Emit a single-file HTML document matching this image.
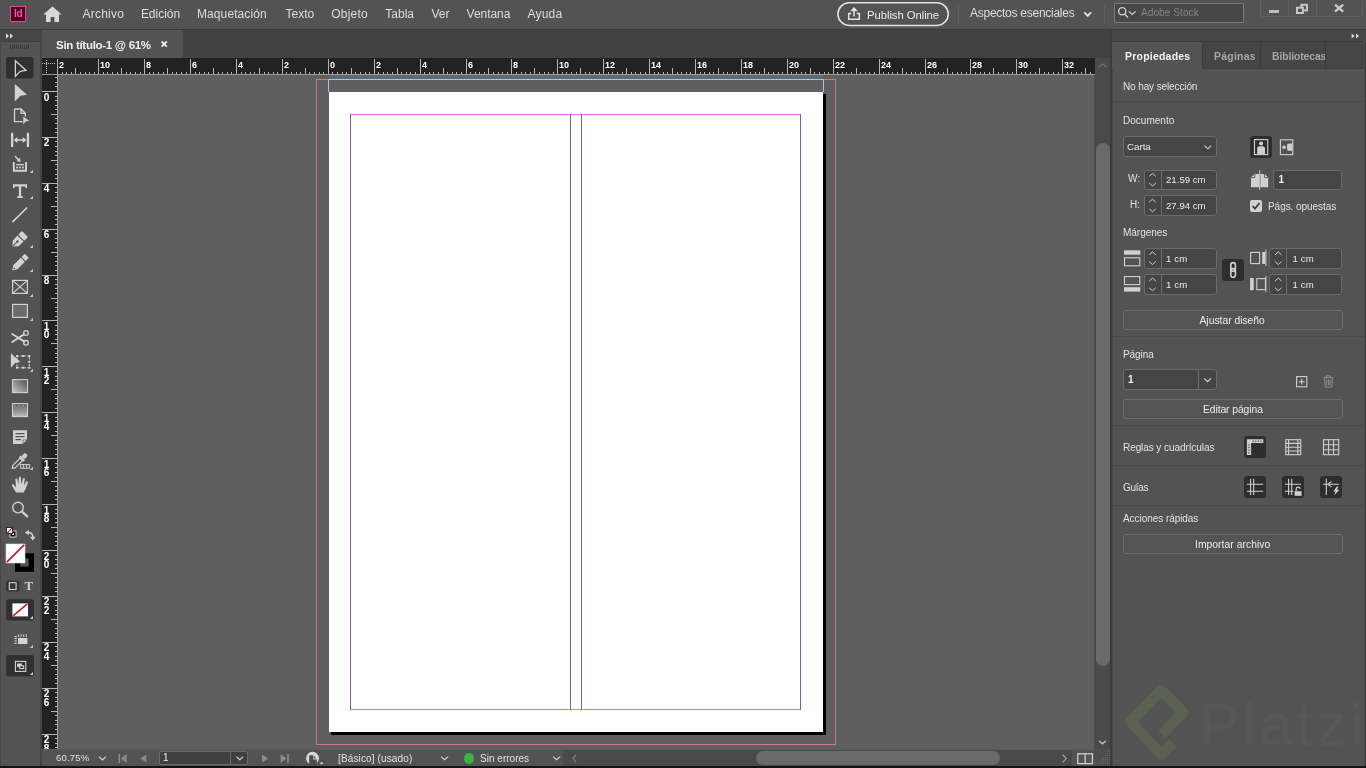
<!DOCTYPE html>
<html lang="es"><head><meta charset="utf-8"><title>Sin título-1 @ 61%</title>
<style>
*{box-sizing:border-box;margin:0;padding:0}
html,body{width:1366px;height:768px;overflow:hidden;background:#535353}
body{position:relative;font-family:"Liberation Sans",sans-serif;color:#e4e4e4;font-size:12px}
.a{position:absolute}
.t{position:absolute;white-space:nowrap;line-height:16px;height:16px}
.b{font-weight:bold}
svg{position:absolute;overflow:visible}
#app{position:absolute;left:0;top:0;width:1366px;height:768px;overflow:hidden;will-change:transform;transform:translateZ(0)}
</style></head>
<body>
<div id="app">
<div class="a" style="left:0px;top:0px;width:1366px;height:29px;background:#535353;"></div>
<div class="a" style="left:0px;top:29px;width:1366px;height:1px;background:#3b3b3b;"></div>
<div class="a" style="left:0px;top:30px;width:40px;height:11px;background:#464646;"></div>
<div class="a" style="left:0px;top:41px;width:40px;height:1px;background:#3f3f3f;"></div>
<div class="a" style="left:0px;top:42px;width:40px;height:724px;background:#535353;"></div>
<div class="a" style="left:0px;top:30px;width:1px;height:736px;background:#474747;"></div>
<div class="a" style="left:40px;top:30px;width:2px;height:736px;background:#444444;"></div>
<div class="a" style="left:42px;top:30px;width:1070px;height:28px;background:#424242;"></div>
<div class="a" style="left:42px;top:30px;width:141px;height:28px;background:#535353;"></div>
<div class="a" style="left:42px;top:58px;width:1052px;height:691px;background:#5f5f5f;"></div>
<div class="a" style="left:1094px;top:58px;width:16px;height:690px;background:#4b4b4b;"></div>
<div class="a" style="left:42px;top:749px;width:1068px;height:1px;background:#5a5a5a;"></div>
<div class="a" style="left:42px;top:750px;width:1068px;height:16px;background:#535353;"></div>
<div class="a" style="left:1112px;top:30px;width:254px;height:11px;background:#464646;"></div>
<div class="a" style="left:1112px;top:41px;width:252px;height:1px;background:#3c3c3c;"></div>
<div class="a" style="left:1112px;top:42px;width:252px;height:26px;background:#454545;"></div>
<div class="a" style="left:1112px;top:68px;width:252px;height:1px;background:#3e3e3e;"></div>
<div class="a" style="left:1112px;top:69px;width:252px;height:697px;background:#535353;"></div>
<div class="a" style="left:1110px;top:30px;width:2px;height:736px;background:#3c3c3c;"></div>
<div class="a" style="left:1112px;top:30px;width:1px;height:736px;background:#474747;"></div>
<div class="a" style="left:1364px;top:42px;width:1px;height:724px;background:#4b4b4b;"></div>
<div class="a" style="left:1365px;top:42px;width:1px;height:724px;background:#383838;"></div>
<div class="a" style="left:0px;top:766px;width:1366px;height:2px;background:#141414;"></div>
<div class="a" style="left:316px;top:79px;width:520px;height:666px;border:1px solid #d07884"></div>
<div class="a" style="left:329px;top:75px;width:494px;height:4px;background:#5a6b76;"></div>
<div class="a" style="left:328px;top:79px;width:496px;height:1px;background:#a6c6d8;"></div>
<div class="a" style="left:328px;top:79px;width:1px;height:13px;background:#a6c6d8;"></div>
<div class="a" style="left:823px;top:79px;width:1px;height:13px;background:#a6c6d8;"></div>
<div class="a" style="left:331px;top:93.5px;width:495px;height:641.5px;background:#000;"></div>
<div class="a" style="left:329px;top:91.6px;width:494.3px;height:640.6px;background:#fff;"></div>
<div class="a" style="left:350px;top:114px;width:451px;height:1px;background:#d773dc;"></div>
<div class="a" style="left:350px;top:709px;width:451px;height:1px;background:#d773dc;"></div>
<div class="a" style="left:350px;top:114px;width:1px;height:596px;background:#8757b3;"></div>
<div class="a" style="left:570px;top:114px;width:1px;height:596px;background:#8757b3;"></div>
<div class="a" style="left:581px;top:114px;width:1px;height:596px;background:#8757b3;"></div>
<div class="a" style="left:800px;top:114px;width:1px;height:596px;background:#8757b3;"></div>
<div class="a" style="left:58px;top:58px;width:1037px;height:17px;background:#222222;"></div>
<div class="a" style="left:42px;top:58px;width:16px;height:17px;background:#222222;"></div>
<div class="a" style="left:42px;top:75px;width:16px;height:674px;background:#222222;"></div>
<svg style="left:0px;top:0px;pointer-events:none" width="1366" height="768" viewBox="0 0 1366 768"><g fill="#b8b5b0" shape-rendering="crispEdges"><rect x="62" y="72" width="1" height="2"/><rect x="66" y="72" width="1" height="2"/><rect x="71" y="72" width="1" height="2"/><rect x="75" y="68" width="1" height="6"/><rect x="80" y="72" width="1" height="2"/><rect x="85" y="72" width="1" height="2"/><rect x="89" y="72" width="1" height="2"/><rect x="94" y="72" width="1" height="2"/><rect x="98" y="59" width="1" height="15"/><rect x="103" y="72" width="1" height="2"/><rect x="107" y="72" width="1" height="2"/><rect x="112" y="72" width="1" height="2"/><rect x="117" y="72" width="1" height="2"/><rect x="121" y="68" width="1" height="6"/><rect x="126" y="72" width="1" height="2"/><rect x="130" y="72" width="1" height="2"/><rect x="135" y="72" width="1" height="2"/><rect x="140" y="72" width="1" height="2"/><rect x="144" y="59" width="1" height="15"/><rect x="149" y="72" width="1" height="2"/><rect x="153" y="72" width="1" height="2"/><rect x="158" y="72" width="1" height="2"/><rect x="163" y="72" width="1" height="2"/><rect x="167" y="68" width="1" height="6"/><rect x="172" y="72" width="1" height="2"/><rect x="176" y="72" width="1" height="2"/><rect x="181" y="72" width="1" height="2"/><rect x="186" y="72" width="1" height="2"/><rect x="190" y="59" width="1" height="15"/><rect x="195" y="72" width="1" height="2"/><rect x="199" y="72" width="1" height="2"/><rect x="204" y="72" width="1" height="2"/><rect x="208" y="72" width="1" height="2"/><rect x="213" y="68" width="1" height="6"/><rect x="218" y="72" width="1" height="2"/><rect x="222" y="72" width="1" height="2"/><rect x="227" y="72" width="1" height="2"/><rect x="231" y="72" width="1" height="2"/><rect x="236" y="59" width="1" height="15"/><rect x="241" y="72" width="1" height="2"/><rect x="245" y="72" width="1" height="2"/><rect x="250" y="72" width="1" height="2"/><rect x="254" y="72" width="1" height="2"/><rect x="259" y="68" width="1" height="6"/><rect x="264" y="72" width="1" height="2"/><rect x="268" y="72" width="1" height="2"/><rect x="273" y="72" width="1" height="2"/><rect x="277" y="72" width="1" height="2"/><rect x="282" y="59" width="1" height="15"/><rect x="286" y="72" width="1" height="2"/><rect x="291" y="72" width="1" height="2"/><rect x="296" y="72" width="1" height="2"/><rect x="300" y="72" width="1" height="2"/><rect x="305" y="68" width="1" height="6"/><rect x="309" y="72" width="1" height="2"/><rect x="314" y="72" width="1" height="2"/><rect x="319" y="72" width="1" height="2"/><rect x="323" y="72" width="1" height="2"/><rect x="328" y="59" width="1" height="15"/><rect x="332" y="72" width="1" height="2"/><rect x="337" y="72" width="1" height="2"/><rect x="342" y="72" width="1" height="2"/><rect x="346" y="72" width="1" height="2"/><rect x="351" y="68" width="1" height="6"/><rect x="355" y="72" width="1" height="2"/><rect x="360" y="72" width="1" height="2"/><rect x="365" y="72" width="1" height="2"/><rect x="369" y="72" width="1" height="2"/><rect x="374" y="59" width="1" height="15"/><rect x="378" y="72" width="1" height="2"/><rect x="383" y="72" width="1" height="2"/><rect x="387" y="72" width="1" height="2"/><rect x="392" y="72" width="1" height="2"/><rect x="397" y="68" width="1" height="6"/><rect x="401" y="72" width="1" height="2"/><rect x="406" y="72" width="1" height="2"/><rect x="410" y="72" width="1" height="2"/><rect x="415" y="72" width="1" height="2"/><rect x="420" y="59" width="1" height="15"/><rect x="424" y="72" width="1" height="2"/><rect x="429" y="72" width="1" height="2"/><rect x="433" y="72" width="1" height="2"/><rect x="438" y="72" width="1" height="2"/><rect x="443" y="68" width="1" height="6"/><rect x="447" y="72" width="1" height="2"/><rect x="452" y="72" width="1" height="2"/><rect x="456" y="72" width="1" height="2"/><rect x="461" y="72" width="1" height="2"/><rect x="466" y="59" width="1" height="15"/><rect x="470" y="72" width="1" height="2"/><rect x="475" y="72" width="1" height="2"/><rect x="479" y="72" width="1" height="2"/><rect x="484" y="72" width="1" height="2"/><rect x="488" y="68" width="1" height="6"/><rect x="493" y="72" width="1" height="2"/><rect x="498" y="72" width="1" height="2"/><rect x="502" y="72" width="1" height="2"/><rect x="507" y="72" width="1" height="2"/><rect x="511" y="59" width="1" height="15"/><rect x="516" y="72" width="1" height="2"/><rect x="521" y="72" width="1" height="2"/><rect x="525" y="72" width="1" height="2"/><rect x="530" y="72" width="1" height="2"/><rect x="534" y="68" width="1" height="6"/><rect x="539" y="72" width="1" height="2"/><rect x="544" y="72" width="1" height="2"/><rect x="548" y="72" width="1" height="2"/><rect x="553" y="72" width="1" height="2"/><rect x="557" y="59" width="1" height="15"/><rect x="562" y="72" width="1" height="2"/><rect x="566" y="72" width="1" height="2"/><rect x="571" y="72" width="1" height="2"/><rect x="576" y="72" width="1" height="2"/><rect x="580" y="68" width="1" height="6"/><rect x="585" y="72" width="1" height="2"/><rect x="589" y="72" width="1" height="2"/><rect x="594" y="72" width="1" height="2"/><rect x="599" y="72" width="1" height="2"/><rect x="603" y="59" width="1" height="15"/><rect x="608" y="72" width="1" height="2"/><rect x="612" y="72" width="1" height="2"/><rect x="617" y="72" width="1" height="2"/><rect x="622" y="72" width="1" height="2"/><rect x="626" y="68" width="1" height="6"/><rect x="631" y="72" width="1" height="2"/><rect x="635" y="72" width="1" height="2"/><rect x="640" y="72" width="1" height="2"/><rect x="645" y="72" width="1" height="2"/><rect x="649" y="59" width="1" height="15"/><rect x="654" y="72" width="1" height="2"/><rect x="658" y="72" width="1" height="2"/><rect x="663" y="72" width="1" height="2"/><rect x="667" y="72" width="1" height="2"/><rect x="672" y="68" width="1" height="6"/><rect x="677" y="72" width="1" height="2"/><rect x="681" y="72" width="1" height="2"/><rect x="686" y="72" width="1" height="2"/><rect x="690" y="72" width="1" height="2"/><rect x="695" y="59" width="1" height="15"/><rect x="700" y="72" width="1" height="2"/><rect x="704" y="72" width="1" height="2"/><rect x="709" y="72" width="1" height="2"/><rect x="713" y="72" width="1" height="2"/><rect x="718" y="68" width="1" height="6"/><rect x="723" y="72" width="1" height="2"/><rect x="727" y="72" width="1" height="2"/><rect x="732" y="72" width="1" height="2"/><rect x="736" y="72" width="1" height="2"/><rect x="741" y="59" width="1" height="15"/><rect x="745" y="72" width="1" height="2"/><rect x="750" y="72" width="1" height="2"/><rect x="755" y="72" width="1" height="2"/><rect x="759" y="72" width="1" height="2"/><rect x="764" y="68" width="1" height="6"/><rect x="768" y="72" width="1" height="2"/><rect x="773" y="72" width="1" height="2"/><rect x="778" y="72" width="1" height="2"/><rect x="782" y="72" width="1" height="2"/><rect x="787" y="59" width="1" height="15"/><rect x="791" y="72" width="1" height="2"/><rect x="796" y="72" width="1" height="2"/><rect x="801" y="72" width="1" height="2"/><rect x="805" y="72" width="1" height="2"/><rect x="810" y="68" width="1" height="6"/><rect x="814" y="72" width="1" height="2"/><rect x="819" y="72" width="1" height="2"/><rect x="824" y="72" width="1" height="2"/><rect x="828" y="72" width="1" height="2"/><rect x="833" y="59" width="1" height="15"/><rect x="837" y="72" width="1" height="2"/><rect x="842" y="72" width="1" height="2"/><rect x="846" y="72" width="1" height="2"/><rect x="851" y="72" width="1" height="2"/><rect x="856" y="68" width="1" height="6"/><rect x="860" y="72" width="1" height="2"/><rect x="865" y="72" width="1" height="2"/><rect x="869" y="72" width="1" height="2"/><rect x="874" y="72" width="1" height="2"/><rect x="879" y="59" width="1" height="15"/><rect x="883" y="72" width="1" height="2"/><rect x="888" y="72" width="1" height="2"/><rect x="892" y="72" width="1" height="2"/><rect x="897" y="72" width="1" height="2"/><rect x="902" y="68" width="1" height="6"/><rect x="906" y="72" width="1" height="2"/><rect x="911" y="72" width="1" height="2"/><rect x="915" y="72" width="1" height="2"/><rect x="920" y="72" width="1" height="2"/><rect x="925" y="59" width="1" height="15"/><rect x="929" y="72" width="1" height="2"/><rect x="934" y="72" width="1" height="2"/><rect x="938" y="72" width="1" height="2"/><rect x="943" y="72" width="1" height="2"/><rect x="947" y="68" width="1" height="6"/><rect x="952" y="72" width="1" height="2"/><rect x="957" y="72" width="1" height="2"/><rect x="961" y="72" width="1" height="2"/><rect x="966" y="72" width="1" height="2"/><rect x="970" y="59" width="1" height="15"/><rect x="975" y="72" width="1" height="2"/><rect x="980" y="72" width="1" height="2"/><rect x="984" y="72" width="1" height="2"/><rect x="989" y="72" width="1" height="2"/><rect x="993" y="68" width="1" height="6"/><rect x="998" y="72" width="1" height="2"/><rect x="1003" y="72" width="1" height="2"/><rect x="1007" y="72" width="1" height="2"/><rect x="1012" y="72" width="1" height="2"/><rect x="1016" y="59" width="1" height="15"/><rect x="1021" y="72" width="1" height="2"/><rect x="1025" y="72" width="1" height="2"/><rect x="1030" y="72" width="1" height="2"/><rect x="1035" y="72" width="1" height="2"/><rect x="1039" y="68" width="1" height="6"/><rect x="1044" y="72" width="1" height="2"/><rect x="1048" y="72" width="1" height="2"/><rect x="1053" y="72" width="1" height="2"/><rect x="1058" y="72" width="1" height="2"/><rect x="1062" y="59" width="1" height="15"/><rect x="1067" y="72" width="1" height="2"/><rect x="1071" y="72" width="1" height="2"/><rect x="1076" y="72" width="1" height="2"/><rect x="1081" y="72" width="1" height="2"/><rect x="1085" y="68" width="1" height="6"/><rect x="1090" y="72" width="1" height="2"/></g></svg>
<div class="a" style="left:58px;top:74px;width:1037px;height:1px;background:#9c9c9c;"></div>
<div class="a" style="left:57px;top:59px;width:1px;height:16px;background:#b8b5b0;"></div>
<span class="t b" style="left:59px;top:57px;font-size:9px;color:#fff">2</span>
<span class="t b" style="left:100px;top:57px;font-size:9px;color:#fff">10</span>
<span class="t b" style="left:146px;top:57px;font-size:9px;color:#fff">8</span>
<span class="t b" style="left:192px;top:57px;font-size:9px;color:#fff">6</span>
<span class="t b" style="left:238px;top:57px;font-size:9px;color:#fff">4</span>
<span class="t b" style="left:284px;top:57px;font-size:9px;color:#fff">2</span>
<span class="t b" style="left:330px;top:57px;font-size:9px;color:#fff">0</span>
<span class="t b" style="left:376px;top:57px;font-size:9px;color:#fff">2</span>
<span class="t b" style="left:422px;top:57px;font-size:9px;color:#fff">4</span>
<span class="t b" style="left:468px;top:57px;font-size:9px;color:#fff">6</span>
<span class="t b" style="left:513px;top:57px;font-size:9px;color:#fff">8</span>
<span class="t b" style="left:559px;top:57px;font-size:9px;color:#fff">10</span>
<span class="t b" style="left:605px;top:57px;font-size:9px;color:#fff">12</span>
<span class="t b" style="left:651px;top:57px;font-size:9px;color:#fff">14</span>
<span class="t b" style="left:697px;top:57px;font-size:9px;color:#fff">16</span>
<span class="t b" style="left:743px;top:57px;font-size:9px;color:#fff">18</span>
<span class="t b" style="left:789px;top:57px;font-size:9px;color:#fff">20</span>
<span class="t b" style="left:835px;top:57px;font-size:9px;color:#fff">22</span>
<span class="t b" style="left:881px;top:57px;font-size:9px;color:#fff">24</span>
<span class="t b" style="left:927px;top:57px;font-size:9px;color:#fff">26</span>
<span class="t b" style="left:972px;top:57px;font-size:9px;color:#fff">28</span>
<span class="t b" style="left:1018px;top:57px;font-size:9px;color:#fff">30</span>
<span class="t b" style="left:1064px;top:57px;font-size:9px;color:#fff">32</span>
<svg style="left:0px;top:0px;pointer-events:none" width="1366" height="768" viewBox="0 0 1366 768"><g fill="#b8b5b0" shape-rendering="crispEdges"><rect x="55" y="77" width="3" height="1"/><rect x="55" y="82" width="3" height="1"/><rect x="55" y="86" width="3" height="1"/><rect x="42" y="91" width="16" height="1"/><rect x="55" y="96" width="3" height="1"/><rect x="55" y="100" width="3" height="1"/><rect x="55" y="105" width="3" height="1"/><rect x="55" y="109" width="3" height="1"/><rect x="51" y="114" width="7" height="1"/><rect x="55" y="118" width="3" height="1"/><rect x="55" y="123" width="3" height="1"/><rect x="55" y="128" width="3" height="1"/><rect x="55" y="132" width="3" height="1"/><rect x="42" y="137" width="16" height="1"/><rect x="55" y="141" width="3" height="1"/><rect x="55" y="146" width="3" height="1"/><rect x="55" y="151" width="3" height="1"/><rect x="55" y="155" width="3" height="1"/><rect x="51" y="160" width="7" height="1"/><rect x="55" y="164" width="3" height="1"/><rect x="55" y="169" width="3" height="1"/><rect x="55" y="174" width="3" height="1"/><rect x="55" y="178" width="3" height="1"/><rect x="42" y="183" width="16" height="1"/><rect x="55" y="187" width="3" height="1"/><rect x="55" y="192" width="3" height="1"/><rect x="55" y="197" width="3" height="1"/><rect x="55" y="201" width="3" height="1"/><rect x="51" y="206" width="7" height="1"/><rect x="55" y="210" width="3" height="1"/><rect x="55" y="215" width="3" height="1"/><rect x="55" y="219" width="3" height="1"/><rect x="55" y="224" width="3" height="1"/><rect x="42" y="229" width="16" height="1"/><rect x="55" y="233" width="3" height="1"/><rect x="55" y="238" width="3" height="1"/><rect x="55" y="242" width="3" height="1"/><rect x="55" y="247" width="3" height="1"/><rect x="51" y="252" width="7" height="1"/><rect x="55" y="256" width="3" height="1"/><rect x="55" y="261" width="3" height="1"/><rect x="55" y="265" width="3" height="1"/><rect x="55" y="270" width="3" height="1"/><rect x="42" y="275" width="16" height="1"/><rect x="55" y="279" width="3" height="1"/><rect x="55" y="284" width="3" height="1"/><rect x="55" y="288" width="3" height="1"/><rect x="55" y="293" width="3" height="1"/><rect x="51" y="298" width="7" height="1"/><rect x="55" y="302" width="3" height="1"/><rect x="55" y="307" width="3" height="1"/><rect x="55" y="311" width="3" height="1"/><rect x="55" y="316" width="3" height="1"/><rect x="42" y="320" width="16" height="1"/><rect x="55" y="325" width="3" height="1"/><rect x="55" y="330" width="3" height="1"/><rect x="55" y="334" width="3" height="1"/><rect x="55" y="339" width="3" height="1"/><rect x="51" y="343" width="7" height="1"/><rect x="55" y="348" width="3" height="1"/><rect x="55" y="353" width="3" height="1"/><rect x="55" y="357" width="3" height="1"/><rect x="55" y="362" width="3" height="1"/><rect x="42" y="366" width="16" height="1"/><rect x="55" y="371" width="3" height="1"/><rect x="55" y="376" width="3" height="1"/><rect x="55" y="380" width="3" height="1"/><rect x="55" y="385" width="3" height="1"/><rect x="51" y="389" width="7" height="1"/><rect x="55" y="394" width="3" height="1"/><rect x="55" y="398" width="3" height="1"/><rect x="55" y="403" width="3" height="1"/><rect x="55" y="408" width="3" height="1"/><rect x="42" y="412" width="16" height="1"/><rect x="55" y="417" width="3" height="1"/><rect x="55" y="421" width="3" height="1"/><rect x="55" y="426" width="3" height="1"/><rect x="55" y="431" width="3" height="1"/><rect x="51" y="435" width="7" height="1"/><rect x="55" y="440" width="3" height="1"/><rect x="55" y="444" width="3" height="1"/><rect x="55" y="449" width="3" height="1"/><rect x="55" y="454" width="3" height="1"/><rect x="42" y="458" width="16" height="1"/><rect x="55" y="463" width="3" height="1"/><rect x="55" y="467" width="3" height="1"/><rect x="55" y="472" width="3" height="1"/><rect x="55" y="477" width="3" height="1"/><rect x="51" y="481" width="7" height="1"/><rect x="55" y="486" width="3" height="1"/><rect x="55" y="490" width="3" height="1"/><rect x="55" y="495" width="3" height="1"/><rect x="55" y="499" width="3" height="1"/><rect x="42" y="504" width="16" height="1"/><rect x="55" y="509" width="3" height="1"/><rect x="55" y="513" width="3" height="1"/><rect x="55" y="518" width="3" height="1"/><rect x="55" y="522" width="3" height="1"/><rect x="51" y="527" width="7" height="1"/><rect x="55" y="532" width="3" height="1"/><rect x="55" y="536" width="3" height="1"/><rect x="55" y="541" width="3" height="1"/><rect x="55" y="545" width="3" height="1"/><rect x="42" y="550" width="16" height="1"/><rect x="55" y="555" width="3" height="1"/><rect x="55" y="559" width="3" height="1"/><rect x="55" y="564" width="3" height="1"/><rect x="55" y="568" width="3" height="1"/><rect x="51" y="573" width="7" height="1"/><rect x="55" y="577" width="3" height="1"/><rect x="55" y="582" width="3" height="1"/><rect x="55" y="587" width="3" height="1"/><rect x="55" y="591" width="3" height="1"/><rect x="42" y="596" width="16" height="1"/><rect x="55" y="600" width="3" height="1"/><rect x="55" y="605" width="3" height="1"/><rect x="55" y="610" width="3" height="1"/><rect x="55" y="614" width="3" height="1"/><rect x="51" y="619" width="7" height="1"/><rect x="55" y="623" width="3" height="1"/><rect x="55" y="628" width="3" height="1"/><rect x="55" y="633" width="3" height="1"/><rect x="55" y="637" width="3" height="1"/><rect x="42" y="642" width="16" height="1"/><rect x="55" y="646" width="3" height="1"/><rect x="55" y="651" width="3" height="1"/><rect x="55" y="656" width="3" height="1"/><rect x="55" y="660" width="3" height="1"/><rect x="51" y="665" width="7" height="1"/><rect x="55" y="669" width="3" height="1"/><rect x="55" y="674" width="3" height="1"/><rect x="55" y="678" width="3" height="1"/><rect x="55" y="683" width="3" height="1"/><rect x="42" y="688" width="16" height="1"/><rect x="55" y="692" width="3" height="1"/><rect x="55" y="697" width="3" height="1"/><rect x="55" y="701" width="3" height="1"/><rect x="55" y="706" width="3" height="1"/><rect x="51" y="711" width="7" height="1"/><rect x="55" y="715" width="3" height="1"/><rect x="55" y="720" width="3" height="1"/><rect x="55" y="724" width="3" height="1"/><rect x="55" y="729" width="3" height="1"/><rect x="42" y="734" width="16" height="1"/><rect x="55" y="738" width="3" height="1"/><rect x="55" y="743" width="3" height="1"/><rect x="55" y="747" width="3" height="1"/></g></svg>
<div class="a" style="left:57px;top:75px;width:1px;height:674px;background:#a4a4a4;"></div>
<div class="a" style="left:42px;top:74px;width:16px;height:1px;background:#9c9c9c;"></div>
<span class="t b" style="left:43.8px;top:89.5px;font-size:10px;color:#fff">0</span>
<span class="t b" style="left:43.8px;top:135.3px;font-size:10px;color:#fff">2</span>
<span class="t b" style="left:43.8px;top:181.2px;font-size:10px;color:#fff">4</span>
<span class="t b" style="left:43.8px;top:227.1px;font-size:10px;color:#fff">6</span>
<span class="t b" style="left:43.8px;top:273.1px;font-size:10px;color:#fff">8</span>
<span class="t b" style="left:43.8px;top:318.9px;font-size:10px;color:#fff">1</span>
<span class="t b" style="left:43.8px;top:327.4px;font-size:10px;color:#fff">0</span>
<span class="t b" style="left:43.8px;top:364.8px;font-size:10px;color:#fff">1</span>
<span class="t b" style="left:43.8px;top:373.3px;font-size:10px;color:#fff">2</span>
<span class="t b" style="left:43.8px;top:410.8px;font-size:10px;color:#fff">1</span>
<span class="t b" style="left:43.8px;top:419.2px;font-size:10px;color:#fff">4</span>
<span class="t b" style="left:43.8px;top:456.6px;font-size:10px;color:#fff">1</span>
<span class="t b" style="left:43.8px;top:465.1px;font-size:10px;color:#fff">6</span>
<span class="t b" style="left:43.8px;top:502.5px;font-size:10px;color:#fff">1</span>
<span class="t b" style="left:43.8px;top:511.0px;font-size:10px;color:#fff">8</span>
<span class="t b" style="left:43.8px;top:548.5px;font-size:10px;color:#fff">2</span>
<span class="t b" style="left:43.8px;top:557.0px;font-size:10px;color:#fff">0</span>
<span class="t b" style="left:43.8px;top:594.4px;font-size:10px;color:#fff">2</span>
<span class="t b" style="left:43.8px;top:602.9px;font-size:10px;color:#fff">2</span>
<span class="t b" style="left:43.8px;top:640.2px;font-size:10px;color:#fff">2</span>
<span class="t b" style="left:43.8px;top:648.8px;font-size:10px;color:#fff">4</span>
<span class="t b" style="left:43.8px;top:686.1px;font-size:10px;color:#fff">2</span>
<span class="t b" style="left:43.8px;top:694.6px;font-size:10px;color:#fff">6</span>
<span class="t b" style="left:43.8px;top:732.1px;font-size:10px;color:#fff">2</span>
<span class="t b" style="left:43.8px;top:740.6px;font-size:10px;color:#fff;height:8.4px;overflow:hidden">8</span>
<svg style="left:42px;top:58px;" width="16" height="17" viewBox="0 0 16 17"><g stroke="#c8c8c8" stroke-width="1" stroke-dasharray="1 1" shape-rendering="crispEdges"><line x1="4.5" y1="2" x2="4.5" y2="15"/><line x1="0" y1="5.5" x2="14" y2="5.5"/></g></svg>
<div class="a" style="left:1095px;top:58px;width:15px;height:691px;background:#4a4a4a;"></div>
<div class="a" style="left:1096px;top:143px;width:14px;height:523px;background:#6a6a6a;border-radius:7px"></div>
<svg style="left:1095px;top:58px;" width="15" height="17" viewBox="0 0 15 17"><path d="M3.6 9.2 L7.6 6 L11.6 9.2" fill="none" stroke="#727272" stroke-width="1.3"/></svg>
<svg style="left:1095px;top:731px;" width="15" height="17" viewBox="0 0 15 17"><path d="M4 10 L7.4 12.8 L10.8 10" fill="none" stroke="#bdbdbd" stroke-width="1.5"/></svg>
<div class="a" style="left:10px;top:6px;width:16px;height:16px;background:#4a0326;border:1px solid #dc4f8c"></div>
<span class="t b" style="left:13.9px;top:6.2px;font-size:10px;color:#f7559c;letter-spacing:-0.2px">Id</span>
<svg style="left:43px;top:6px;" width="19" height="17" viewBox="0 0 19 17"><path d="M9.5 0.5 L0.3 8.6 H3 V16 H7.6 V11 H11.4 V16 H16 V8.6 H18.7 Z" fill="#d9d9d9"/></svg>
<span class="t " style="left:82.4px;top:6.300000000000001px;font-size:12px;letter-spacing:0.255px;color:#dddddd;">Archivo</span>
<span class="t " style="left:140.9px;top:6.300000000000001px;font-size:12px;letter-spacing:-0.023px;color:#dddddd;">Edición</span>
<span class="t " style="left:197.0px;top:6.300000000000001px;font-size:12px;letter-spacing:0.090px;color:#dddddd;">Maquetación</span>
<span class="t " style="left:285.5px;top:6.300000000000001px;font-size:12px;letter-spacing:0.024px;color:#dddddd;">Texto</span>
<span class="t " style="left:331.3px;top:6.300000000000001px;font-size:12px;letter-spacing:0.207px;color:#dddddd;">Objeto</span>
<span class="t " style="left:385.2px;top:6.300000000000001px;font-size:12px;letter-spacing:0.042px;color:#dddddd;">Tabla</span>
<span class="t " style="left:431.4px;top:6.300000000000001px;font-size:12px;letter-spacing:0.096px;color:#dddddd;">Ver</span>
<span class="t " style="left:466.6px;top:6.300000000000001px;font-size:12px;letter-spacing:-0.050px;color:#dddddd;">Ventana</span>
<span class="t " style="left:527.5px;top:6.300000000000001px;font-size:12px;letter-spacing:0.218px;color:#dddddd;">Ayuda</span>
<svg style="left:837px;top:2px;" width="112" height="24" viewBox="0 0 112 24"><rect x="0.9" y="0.8" width="110.4" height="22.6" rx="11.3" fill="none" stroke="#e4e4e4" stroke-width="1.5"/></svg>
<svg style="left:847px;top:6px;" width="14" height="15" viewBox="0 0 14 15"><g fill="none" stroke="#e4e4e4" stroke-width="1.5"><path d="M4.2 7.4 H1.7 V13.2 H12.3 V7.4 H9.8"/><path d="M7 10.6 V3.5"/></g><path d="M3.2 5.2 L7 1 L10.8 5.2 Z" fill="#e4e4e4"/></svg>
<span class="t " style="left:867px;top:6.9px;font-size:11.3px;letter-spacing:-0.055px;color:#ececec;">Publish Online</span>
<div class="a" style="left:958px;top:5px;width:1px;height:19px;background:#606060;"></div>
<span class="t " style="left:970px;top:4.699999999999999px;font-size:12px;letter-spacing:-0.263px;color:#dddddd;">Aspectos esenciales</span>
<svg style="left:1082px;top:9px;" width="11" height="9" viewBox="0 0 11 9"><path d="M2.4 3.4 L5.7 6.8 L9 3.4" fill="none" stroke="#e0e0e0" stroke-width="1.9"/></svg>
<div class="a" style="left:1104px;top:5px;width:1px;height:19px;background:#606060;"></div>
<div class="a" style="left:1114px;top:3px;width:130px;height:20px;background:#474747;border:1px solid #7a7a7a;border-radius:1px"></div>
<svg style="left:1117px;top:6px;" width="20" height="14" viewBox="0 0 20 14"><g fill="none" stroke="#cfcfcf" stroke-width="1.4"><circle cx="5.2" cy="5.2" r="3.6"/><path d="M7.8 8 L11 11.6"/><path d="M11.8 5.4 L15.2 8.4 L18.6 5.4" stroke-width="1.2"/></g></svg>
<span class="t " style="left:1141px;top:4.6px;font-size:10.2px;letter-spacing:-0.004px;color:#858585;">Adobe Stock</span>
<div class="a" style="left:1260px;top:-1px;width:103px;height:18px;border:1px solid #626262;border-radius:0 0 3px 3px"></div>
<div class="a" style="left:1288px;top:0px;width:1px;height:17px;background:#606060;"></div>
<div class="a" style="left:1316px;top:0px;width:1px;height:17px;background:#606060;"></div>
<div class="a" style="left:1269px;top:10px;width:10px;height:2.6px;background:#bcbcbc;"></div>
<svg style="left:1295px;top:3px;" width="14" height="12" viewBox="0 0 14 12"><g fill="none" stroke="#c6c6c6" stroke-width="2"><rect x="6.4" y="1.8" width="5.6" height="5.6"/><rect x="2" y="4.7" width="5.9" height="5.3" fill="#535353"/></g></svg>
<svg style="left:1333px;top:3px;" width="12" height="10" viewBox="0 0 12 10"><path d="M2 1.6 L10.2 8.6 M10.2 1.6 L2 8.6" stroke="#c8c8c8" stroke-width="2.4" fill="none"/></svg>
<span class="t b" style="left:56px;top:37px;font-size:11.5px;letter-spacing:-0.291px;color:#f0f0f0;">Sin título-1 @ 61%</span>
<svg style="left:160px;top:40px;" width="9" height="9" viewBox="0 0 9 9"><path d="M1.6 1.5 L6.8 6.7 M6.8 1.5 L1.6 6.7" stroke="#f0f0f0" stroke-width="1.8" fill="none"/></svg>
<svg style="left:0px;top:0px;" width="42" height="768" viewBox="0 0 42 768"><path d="M6 33.2 L9 36 L6 38.8 Z M10 33.2 L13 36 L10 38.8 Z" fill="#d8d8d8"/><rect x="10" y="45" width="1" height="4" fill="#3a3a3a"/><rect x="12" y="45" width="1" height="4" fill="#3a3a3a"/><rect x="14" y="45" width="1" height="4" fill="#3a3a3a"/><rect x="16" y="45" width="1" height="4" fill="#3a3a3a"/><rect x="18" y="45" width="1" height="4" fill="#3a3a3a"/><rect x="20" y="45" width="1" height="4" fill="#3a3a3a"/><rect x="22" y="45" width="1" height="4" fill="#3a3a3a"/><rect x="24" y="45" width="1" height="4" fill="#3a3a3a"/><rect x="26" y="45" width="1" height="4" fill="#3a3a3a"/><rect x="28" y="45" width="1" height="4" fill="#3a3a3a"/><rect x="6" y="57" width="27.5" height="21.5" rx="2.5" fill="#303030"/><path d="M15.4 60.8 L26 70.4 L20.2 71.4 L15.4 76.4 Z" fill="none" stroke="#d2d2d2" stroke-width="1.3" stroke-linejoin="miter"/><path d="M14.8 84 L27 94.8 L20.4 95.8 L14.8 101.4 Z" fill="#d2d2d2"/><path d="M14.5 109 H21 L25.3 113.3 V116.5 M22.5 121.6 H14.5 V109 M21 109 V113.3 H25.3" fill="none" stroke="#d2d2d2" stroke-width="1.3"/><path d="M23.2 116.6 L29.2 120.8 L25.6 121.4 L23.2 124.4 Z" fill="#d2d2d2"/><rect x="11" y="132.8" width="2.3" height="14.2" fill="#d2d2d2"/><rect x="26.8" y="132.8" width="2.3" height="14.2" fill="#d2d2d2"/><path d="M15.5 140 H24.5" stroke="#d2d2d2" stroke-width="1.6"/><path d="M13.6 140 L17.4 136.9 V143.1 Z M26.5 140 L22.7 136.9 V143.1 Z" fill="#d2d2d2"/><path d="M13.8 162 V170.8 H26 V162" fill="none" stroke="#d2d2d2" stroke-width="1.9"/><g fill="#d2d2d2"><rect x="16.2" y="164" width="7.6" height="1.3"/><rect x="16.2" y="166.6" width="1.8" height="1.8"/><rect x="19.1" y="166.6" width="1.8" height="1.8"/><rect x="22" y="166.6" width="1.8" height="1.8"/></g><path d="M15 156.2 L19 160.2" stroke="#d2d2d2" stroke-width="1.6"/><path d="M20.6 161.8 L16.6 161.2 L20 157.8 Z" fill="#d2d2d2"/><path d="M13 184.3 H27 V188 H25.6 L25.2 186.6 H21.1 V196.2 L23 196.6 V197.9 H17 V196.6 L18.9 196.2 V186.6 H14.8 L14.4 188 H13 Z" fill="#d2d2d2"/><path d="M12.9 221.6 L26.6 208" stroke="#d2d2d2" stroke-width="1.7" stroke-linecap="round"/><g transform="translate(12.4 246.6) rotate(-45)"><path d="M0 0 L4.6 -4 L11.4 -4.3 L11.4 4.3 L4.6 4 Z" fill="#d2d2d2"/><rect x="12.6" y="-4.3" width="5.2" height="8.6" rx="0.8" fill="#d2d2d2"/><path d="M0.6 0 H7" stroke="#535353" stroke-width="1"/><circle cx="7.3" cy="0" r="1.2" fill="#535353"/></g><g transform="translate(12.2 270.4) rotate(-45)"><path d="M0 0 L4.6 -2.9 H15 V2.9 H4.6 Z" fill="#d2d2d2"/><rect x="16" y="-2.9" width="4.6" height="5.8" rx="0.8" fill="#d2d2d2"/><path d="M1.6 0 L3.6 -1 V1 Z" fill="#535353"/></g><g fill="none" stroke="#d2d2d2" stroke-width="1.2"><rect x="12.6" y="280.4" width="14.8" height="13"/><path d="M12.6 280.4 L27.4 293.4 M27.4 280.4 L12.6 293.4"/></g><rect x="12.6" y="304.4" width="14.8" height="13" fill="#6b6b6b" stroke="#d2d2d2" stroke-width="1.2"/><g fill="none" stroke="#d2d2d2"><circle cx="26" cy="333" r="2.3" stroke-width="1.3"/><circle cx="26" cy="342.8" r="2.3" stroke-width="1.3"/><path d="M12.2 334 L24 341.4 M12.2 342 L24 334.4" stroke-width="1.9" stroke-linecap="round"/></g><rect x="17" y="356" width="12.3" height="11.7" fill="none" stroke="#d2d2d2" stroke-width="1.1" stroke-dasharray="2 1.4"/><g fill="#d2d2d2"><rect x="16" y="355" width="2" height="2"/><rect x="22.2" y="355" width="2" height="2"/><rect x="28.3" y="355" width="2" height="2"/><rect x="28.3" y="360.8" width="2" height="2"/><rect x="28.3" y="366.7" width="2" height="2"/><rect x="22.2" y="366.7" width="2" height="2"/><rect x="16" y="366.7" width="2" height="2"/></g><path d="M10.9 353.3 L20.4 362 L15.4 362.8 L10.9 367.8 Z" fill="#d2d2d2"/><defs><linearGradient id="gsw" x1="0" y1="1" x2="1" y2="0"><stop offset="0" stop-color="#c8c8c8"/><stop offset="1" stop-color="#4e4e4e"/></linearGradient><linearGradient id="gft" x1="0" y1="0" x2="0" y2="1"><stop offset="0" stop-color="#5a5a5a"/><stop offset="1" stop-color="#bdbdbd"/></linearGradient></defs><rect x="12.5" y="379.6" width="15" height="13" fill="url(#gsw)" stroke="#d2d2d2" stroke-width="1.1"/><rect x="12.5" y="403.6" width="15" height="13" fill="url(#gft)" stroke="#d2d2d2" stroke-width="1.1"/><g fill="#8a8a8a"><rect x="14" y="405" width="2" height="2"/><rect x="18" y="405" width="2" height="2"/><rect x="22" y="405" width="2" height="2"/><rect x="16" y="407" width="2" height="2"/><rect x="20" y="407" width="2" height="2"/><rect x="24" y="407" width="2" height="2"/></g><path d="M13 430.3 H27 V440 L23 444 H13 Z" fill="#d2d2d2"/><path d="M23 444 V440 H27 Z" fill="#e8e8e8" stroke="#535353" stroke-width="0.8"/><g stroke="#535353" stroke-width="1.3"><path d="M15.5 433.6 H24.5 M15.5 436.6 H24.5 M15.5 439.6 H21"/></g><g transform="translate(12.4 468.2) rotate(-45)"><path d="M0 0 L2.2 -1.7 H12.4 V1.7 H2.2 Z" fill="none" stroke="#d2d2d2" stroke-width="1.2"/><rect x="12.4" y="-3.3" width="2.4" height="6.6" rx="0.6" fill="#d2d2d2"/><rect x="14.8" y="-2.2" width="5.2" height="4.4" rx="2" fill="#d2d2d2"/></g><g fill="none" stroke="#d2d2d2" stroke-width="1"><rect x="20.6" y="464.6" width="9" height="3.6"/><path d="M23.6 464.6 V468.2 M26.6 464.6 V468.2"/></g><path d="M16.2 492.6 C14.6 490.6 13.2 487.6 12 485.6 C11.6 484.6 12.8 483.8 13.8 484.8 L16 487.4 L15.4 479.6 C15.3 478.2 17.2 478 17.4 479.4 L18.4 484.6 L18.8 477.8 C18.9 476.4 20.8 476.4 20.9 477.8 L21.2 484.6 L22.8 478.8 C23.2 477.5 25 477.9 24.8 479.3 L23.9 485.6 L26 481.8 C26.7 480.6 28.3 481.4 27.8 482.7 C26.6 486 25.6 489.6 23.6 492.6 Z" fill="#d2d2d2"/><circle cx="18" cy="507.6" r="5.3" fill="none" stroke="#d2d2d2" stroke-width="1.4"/><path d="M22 511.6 L27.2 516.4" stroke="#d2d2d2" stroke-width="2.2" stroke-linecap="round"/><rect x="10" y="531" width="6" height="6" fill="#000" stroke="#cfcfcf" stroke-width="1"/><rect x="12" y="533" width="2" height="2" fill="#cfcfcf"/><rect x="6.5" y="527.5" width="6" height="6" fill="#fff" stroke="#2a2a2a" stroke-width="1"/><path d="M7.2 533 L12 528.2" stroke="#d0202a" stroke-width="1.2"/><path d="M27.6 532.6 C31.4 532.4 32.8 534 32.8 537" fill="none" stroke="#d2d2d2" stroke-width="1.5"/><path d="M24.8 532.6 L28.8 530 V535.2 Z M32.8 540.6 L30.1 536.8 H35.5 Z" fill="#d2d2d2"/><path d="M15 553.2 H34 V571.8 H15 Z M20.3 558.6 V566.4 H28.7 V558.6 Z" fill="#000" fill-rule="evenodd"/><rect x="6" y="544" width="19" height="19" fill="#fff"/><path d="M6.6 562.4 L24.4 544.6" stroke="#cc1f27" stroke-width="1.8"/><rect x="6" y="544" width="19" height="19" fill="none" stroke="#e9d9d9" stroke-width="0.6"/><rect x="6" y="580.4" width="13.4" height="11.2" rx="1.5" fill="#353535"/><rect x="9.3" y="582.7" width="6.8" height="6.8" fill="none" stroke="#d2d2d2" stroke-width="1.1"/><rect x="6.2" y="599.2" width="27.8" height="21.2" rx="2.5" fill="#303030"/><rect x="12.4" y="603.4" width="15.6" height="13" fill="#fff"/><path d="M13 615.9 L27.4 603.9" stroke="#cc1f27" stroke-width="1.6"/><rect x="18" y="638" width="9.4" height="6" fill="#d2d2d2"/><g fill="#d2d2d2"><rect x="14.4" y="638" width="2.4" height="1.1"/><rect x="14.4" y="640.4" width="2.4" height="1.1"/><rect x="14.4" y="642.8" width="2.4" height="1.1"/><rect x="18" y="634.4" width="1.1" height="2.4"/><rect x="20.6" y="634.4" width="1.1" height="2.4"/><rect x="23.2" y="634.4" width="1.1" height="2.4"/><rect x="25.8" y="634.4" width="1.1" height="2.4"/><rect x="14.4" y="636" width="2.4" height="1.1"/></g><rect x="6.2" y="655" width="27.8" height="21.4" rx="2.5" fill="#303030"/><g fill="none" stroke="#d2d2d2" stroke-width="1.1"><rect x="15.4" y="661.4" width="10.4" height="10"/><rect x="17.6" y="664" width="3.8" height="2.6" fill="#d2d2d2"/><rect x="19.8" y="665.8" width="3.8" height="2.8" fill="#303030"/></g><path d="M33 169.8 V173 H29.8 Z" fill="#c8c8c8"/><path d="M33 195.8 V199 H29.8 Z" fill="#c8c8c8"/><path d="M33 244.8 V248 H29.8 Z" fill="#c8c8c8"/><path d="M33 268.8 V272 H29.8 Z" fill="#c8c8c8"/><path d="M33 293.8 V297 H29.8 Z" fill="#c8c8c8"/><path d="M33 317.8 V321 H29.8 Z" fill="#c8c8c8"/><path d="M33 368.8 V372 H29.8 Z" fill="#c8c8c8"/><path d="M33 466.8 V470 H29.8 Z" fill="#c8c8c8"/><path d="M33 615.8 V619 H29.8 Z" fill="#c8c8c8"/><path d="M33 644.8 V648 H29.8 Z" fill="#c8c8c8"/><path d="M33 671.8 V675 H29.8 Z" fill="#c8c8c8"/></svg>
<span class="t b" style="left:24.6px;top:578.3px;font-size:13px;color:#d2d2d2;font-family:'Liberation Serif',serif">T</span>
<svg style="left:1350px;top:31.5px;" width="12" height="8" viewBox="0 0 12 8"><path d="M1.6 1.4 L4.6 4 L1.6 6.6 Z M6 1.4 L9 4 L6 6.6 Z" fill="#d8d8d8"/></svg>
<div class="a" style="left:1112px;top:42px;width:90px;height:27px;background:#535353;"></div>
<div class="a" style="left:1202px;top:42px;width:1px;height:26px;background:#3a3a3a;"></div>
<div class="a" style="left:1260px;top:42px;width:1px;height:26px;background:#3a3a3a;"></div>
<div class="a" style="left:1325px;top:42px;width:1px;height:26px;background:#3a3a3a;"></div>
<span class="t b" style="left:1125px;top:48.8px;font-size:10.4px;letter-spacing:0.271px;color:#f2f2f2;">Propiedades</span>
<span class="t b" style="left:1214px;top:48.9px;font-size:10.4px;letter-spacing:0.274px;color:#a6a6a6;">Páginas</span>
<span class="t b" style="left:1272px;top:48.9px;font-size:10.4px;color:#a6a6a6;width:52.6px;overflow:hidden;letter-spacing:-0.11px">Bibliotecas CC</span>
<span class="t " style="left:1123px;top:78.5px;font-size:10px;letter-spacing:-0.116px;color:#e2e2e2;">No hay selección</span>
<div class="a" style="left:1112px;top:101px;width:252px;height:1px;background:#4a4a4a;"></div>
<span class="t " style="left:1123px;top:112.5px;font-size:10px;letter-spacing:0.018px;color:#e2e2e2;">Documento</span>
<div class="a" style="left:1123px;top:136px;width:93.5px;height:20.5px;background:#454545;border:1px solid #6b6b6b;border-radius:3px"></div>
<span class="t " style="left:1127px;top:139.3px;font-size:9.8px;letter-spacing:-0.053px;color:#ececec;">Carta</span>
<svg style="left:0px;top:0px;" width="1" height="1" viewBox="0 0 1 1"><path d="M1204.3999999999999 145.54999999999998 L1207.8 148.85 L1211.2 145.54999999999998" fill="none" stroke="#d6d6d6" stroke-width="1.1"/></svg>
<div class="a" style="left:1250px;top:136px;width:22px;height:22px;background:#2e2e2e;border-radius:3px"></div>
<svg style="left:1250px;top:136px;" width="22" height="22" viewBox="0 0 22 22"><rect x="4.5" y="3.6" width="13.2" height="15" fill="none" stroke="#d0d0d0" stroke-width="1.1"/><circle cx="11.1" cy="7.6" r="2" fill="#d0d0d0"/><path d="M7.2 18 V12.4 C7.2 10.6 8.4 10.2 11.1 10.2 C13.8 10.2 15 10.6 15 12.4 V18 Z" fill="#d0d0d0"/></svg>
<svg style="left:1279px;top:136px;" width="16" height="22" viewBox="0 0 16 22"><rect x="1.4" y="3.8" width="12.4" height="14.8" fill="none" stroke="#d0d0d0" stroke-width="1.1"/><circle cx="5" cy="11.2" r="1.8" fill="#d0d0d0"/><path d="M13.4 7.6 H9.8 C8.4 7.6 8 8.6 8 11.2 C8 13.8 8.4 14.8 9.8 14.8 H13.4 Z" fill="#d0d0d0"/></svg>
<span class="t " style="left:1128px;top:171.3px;font-size:10px;letter-spacing:0.132px;color:#e2e2e2;">W:</span>
<div class="a" style="left:1143.5px;top:169.5px;width:73px;height:20.5px;background:#454545;border:1px solid #6b6b6b;border-radius:3px"></div>
<div class="a" style="left:1160.5px;top:170.5px;width:1px;height:18.5px;background:#6b6b6b;"></div>
<svg style="left:0px;top:0px;" width="1" height="1" viewBox="0 0 1 1"><path d="M1149.2 176.4 L1152.5 173.4 L1155.8 176.4" fill="none" stroke="#d0d0d0" stroke-width="1"/></svg>
<svg style="left:0px;top:0px;" width="1" height="1" viewBox="0 0 1 1"><path d="M1149.2 183.0 L1152.5 186.0 L1155.8 183.0" fill="none" stroke="#d0d0d0" stroke-width="1"/></svg>
<span class="t " style="left:1166px;top:172.4px;font-size:9.6px;letter-spacing:0.014px;color:#ececec;">21.59 cm</span>
<span class="t " style="left:1130px;top:197.3px;font-size:10px;letter-spacing:0.150px;color:#e2e2e2;">H:</span>
<div class="a" style="left:1143.5px;top:195.3px;width:73px;height:20.5px;background:#454545;border:1px solid #6b6b6b;border-radius:3px"></div>
<div class="a" style="left:1160.5px;top:196.3px;width:1px;height:18.5px;background:#6b6b6b;"></div>
<svg style="left:0px;top:0px;" width="1" height="1" viewBox="0 0 1 1"><path d="M1149.2 202.20000000000002 L1152.5 199.20000000000002 L1155.8 202.20000000000002" fill="none" stroke="#d0d0d0" stroke-width="1"/></svg>
<svg style="left:0px;top:0px;" width="1" height="1" viewBox="0 0 1 1"><path d="M1149.2 208.8 L1152.5 211.8 L1155.8 208.8" fill="none" stroke="#d0d0d0" stroke-width="1"/></svg>
<span class="t " style="left:1166px;top:198.20000000000002px;font-size:9.6px;letter-spacing:0.014px;color:#ececec;">27.94 cm</span>
<svg style="left:1250px;top:169px;" width="20" height="22" viewBox="0 0 20 22"><path d="M1 8.4 L4.6 5 H9 V18.2 H1 Z M10.4 5 H14.6 L18.2 8.4 V18.2 H10.4 Z" fill="#d0d0d0"/><path d="M1.2 8.6 H4.8 V5.2 M18 8.6 H14.4 V5.2" fill="none" stroke="#535353" stroke-width="0.9"/><path d="M9.7 1.4 V21" stroke="#d0d0d0" stroke-width="1"/></svg>
<div class="a" style="left:1273.3px;top:169.5px;width:68.5px;height:20.5px;background:#454545;border:1px solid #6b6b6b;border-radius:3px"></div>
<span class="t b" style="left:1278.5px;top:171.6px;font-size:10px;color:#f0f0f0;">1</span>
<div class="a" style="left:1250px;top:200px;width:12px;height:12px;background:#d2d2d2;border-radius:2px"></div>
<svg style="left:1250px;top:200px;" width="12" height="12" viewBox="0 0 12 12"><path d="M2.6 6 L5 8.6 L9.6 3" fill="none" stroke="#3c3c3c" stroke-width="1.7"/></svg>
<span class="t " style="left:1268px;top:198.6px;font-size:10px;letter-spacing:-0.053px;color:#e2e2e2;">Págs. opuestas</span>
<span class="t " style="left:1123px;top:224.5px;font-size:10px;letter-spacing:-0.021px;color:#e2e2e2;">Márgenes</span>
<svg style="left:1123px;top:248px;" width="20" height="48" viewBox="0 0 20 48"><rect x="1" y="2.3" width="16.3" height="4.4" fill="#d0d0d0"/><rect x="1.5" y="9.8" width="15.3" height="8" fill="none" stroke="#d0d0d0" stroke-width="1.1"/><rect x="1.5" y="28.6" width="15.3" height="8" fill="none" stroke="#d0d0d0" stroke-width="1.1"/><rect x="1" y="39.2" width="16.3" height="4.4" fill="#d0d0d0"/></svg>
<div class="a" style="left:1143.5px;top:248px;width:73px;height:20.5px;background:#454545;border:1px solid #6b6b6b;border-radius:3px"></div>
<div class="a" style="left:1160.5px;top:249px;width:1px;height:18.5px;background:#6b6b6b;"></div>
<svg style="left:0px;top:0px;" width="1" height="1" viewBox="0 0 1 1"><path d="M1149.2 254.9 L1152.5 251.9 L1155.8 254.9" fill="none" stroke="#d0d0d0" stroke-width="1"/></svg>
<svg style="left:0px;top:0px;" width="1" height="1" viewBox="0 0 1 1"><path d="M1149.2 261.5 L1152.5 264.5 L1155.8 261.5" fill="none" stroke="#d0d0d0" stroke-width="1"/></svg>
<span class="t " style="left:1166px;top:250.89999999999998px;font-size:9.6px;letter-spacing:0.124px;color:#ececec;">1 cm</span>
<div class="a" style="left:1143.5px;top:274.2px;width:73px;height:20.5px;background:#454545;border:1px solid #6b6b6b;border-radius:3px"></div>
<div class="a" style="left:1160.5px;top:275.2px;width:1px;height:18.5px;background:#6b6b6b;"></div>
<svg style="left:0px;top:0px;" width="1" height="1" viewBox="0 0 1 1"><path d="M1149.2 281.09999999999997 L1152.5 278.09999999999997 L1155.8 281.09999999999997" fill="none" stroke="#d0d0d0" stroke-width="1"/></svg>
<svg style="left:0px;top:0px;" width="1" height="1" viewBox="0 0 1 1"><path d="M1149.2 287.7 L1152.5 290.7 L1155.8 287.7" fill="none" stroke="#d0d0d0" stroke-width="1"/></svg>
<span class="t " style="left:1166px;top:277.09999999999997px;font-size:9.6px;letter-spacing:0.124px;color:#ececec;">1 cm</span>
<div class="a" style="left:1222px;top:259px;width:22px;height:22px;background:#2e2e2e;border-radius:3px"></div>
<svg style="left:1222px;top:259px;" width="22" height="22" viewBox="0 0 22 22"><g fill="none" stroke="#d0d0d0" stroke-width="1.6"><rect x="8.8" y="3.6" width="4.6" height="8.6" rx="2.3"/><rect x="8.8" y="9.6" width="4.6" height="8.6" rx="2.3"/></g></svg>
<svg style="left:1249px;top:248px;" width="20" height="48" viewBox="0 0 20 48"><rect x="1.6" y="4.4" width="9" height="11.2" fill="none" stroke="#d0d0d0" stroke-width="1.1"/><rect x="13.2" y="4" width="3" height="12" fill="#d0d0d0"/><path d="M16.9 1.8 V18" stroke="#d0d0d0" stroke-width="1"/><rect x="1.1" y="30" width="3.6" height="12.2" fill="#d0d0d0"/><rect x="7.8" y="30.6" width="8.6" height="11" fill="none" stroke="#d0d0d0" stroke-width="1.1"/><path d="M16.9 28 V44" stroke="#d0d0d0" stroke-width="1"/></svg>
<div class="a" style="left:1269.3px;top:248px;width:73px;height:20.5px;background:#454545;border:1px solid #6b6b6b;border-radius:3px"></div>
<div class="a" style="left:1286.3px;top:249px;width:1px;height:18.5px;background:#6b6b6b;"></div>
<svg style="left:0px;top:0px;" width="1" height="1" viewBox="0 0 1 1"><path d="M1275.0 254.9 L1278.3 251.9 L1281.6 254.9" fill="none" stroke="#d0d0d0" stroke-width="1"/></svg>
<svg style="left:0px;top:0px;" width="1" height="1" viewBox="0 0 1 1"><path d="M1275.0 261.5 L1278.3 264.5 L1281.6 261.5" fill="none" stroke="#d0d0d0" stroke-width="1"/></svg>
<span class="t " style="left:1292.5px;top:250.89999999999998px;font-size:9.6px;letter-spacing:0.124px;color:#ececec;">1 cm</span>
<div class="a" style="left:1269.3px;top:274.2px;width:73px;height:20.5px;background:#454545;border:1px solid #6b6b6b;border-radius:3px"></div>
<div class="a" style="left:1286.3px;top:275.2px;width:1px;height:18.5px;background:#6b6b6b;"></div>
<svg style="left:0px;top:0px;" width="1" height="1" viewBox="0 0 1 1"><path d="M1275.0 281.09999999999997 L1278.3 278.09999999999997 L1281.6 281.09999999999997" fill="none" stroke="#d0d0d0" stroke-width="1"/></svg>
<svg style="left:0px;top:0px;" width="1" height="1" viewBox="0 0 1 1"><path d="M1275.0 287.7 L1278.3 290.7 L1281.6 287.7" fill="none" stroke="#d0d0d0" stroke-width="1"/></svg>
<span class="t " style="left:1292.5px;top:277.09999999999997px;font-size:9.6px;letter-spacing:0.124px;color:#ececec;">1 cm</span>
<div class="a" style="left:1123px;top:310px;width:219.6px;height:20px;background:#545454;border:1px solid #6b6b6b;border-radius:3px"></div>
<span class="t " style="left:1199.5px;top:313.3px;font-size:10.3px;letter-spacing:0.002px;color:#ececec;">Ajustar diseño</span>
<div class="a" style="left:1112px;top:336px;width:252px;height:1px;background:#4a4a4a;"></div>
<span class="t " style="left:1123px;top:346.6px;font-size:10px;letter-spacing:-0.057px;color:#e2e2e2;">Página</span>
<div class="a" style="left:1123px;top:369.2px;width:93.5px;height:20.5px;background:#454545;border:1px solid #6b6b6b;border-radius:3px"></div>
<div class="a" style="left:1198px;top:370px;width:1px;height:18.8px;background:#6b6b6b;"></div>
<span class="t b" style="left:1128px;top:372.4px;font-size:10px;color:#f0f0f0;">1</span>
<svg style="left:0px;top:0px;" width="1" height="1" viewBox="0 0 1 1"><path d="M1204.1999999999998 378.35 L1207.6 381.65 L1211.0 378.35" fill="none" stroke="#d6d6d6" stroke-width="1.1"/></svg>
<svg style="left:1296px;top:376px;" width="12" height="12" viewBox="0 0 12 12"><rect x="0.6" y="0.6" width="10.2" height="10.2" fill="none" stroke="#d0d0d0" stroke-width="1.1"/><path d="M5.7 2.8 V8.6 M2.8 5.7 H8.6" stroke="#d0d0d0" stroke-width="1.1"/></svg>
<svg style="left:1323px;top:374.6px;" width="12" height="13" viewBox="0 0 12 13"><g fill="none" stroke="#8e8e8e" stroke-width="1"><path d="M0.6 2.6 H10.4 M3.6 2.4 V0.8 H7.4 V2.4"/><path d="M1.6 2.8 L2.2 12 H8.8 L9.4 2.8"/><path d="M3.8 4.6 V10.2 M5.5 4.6 V10.2 M7.2 4.6 V10.2"/></g></svg>
<div class="a" style="left:1123px;top:398.5px;width:219.6px;height:20px;background:#545454;border:1px solid #6b6b6b;border-radius:3px"></div>
<span class="t " style="left:1203px;top:401.8px;font-size:10.3px;letter-spacing:-0.069px;color:#ececec;">Editar página</span>
<div class="a" style="left:1112px;top:425px;width:252px;height:1px;background:#4a4a4a;"></div>
<span class="t " style="left:1123px;top:439.6px;font-size:10px;letter-spacing:-0.076px;color:#e2e2e2;">Reglas y cuadrículas</span>
<div class="a" style="left:1244px;top:436px;width:22px;height:22px;background:#2e2e2e;border-radius:3px"></div>
<svg style="left:1244px;top:436px;" width="22" height="22" viewBox="0 0 22 22"><path d="M2.9 3.2 H19.3 V7 H7.1 V19 H2.9 Z" fill="#d0d0d0"/><g fill="#2e2e2e"><rect x="8.6" y="4.6" width="1.2" height="1.2"/><rect x="11.2" y="4.6" width="1.2" height="1.2"/><rect x="13.8" y="4.6" width="1.2" height="1.2"/><rect x="16.4" y="4.6" width="1.2" height="1.2"/><rect x="4.4" y="8.4" width="1.2" height="1.2"/><rect x="4.4" y="11" width="1.2" height="1.2"/><rect x="4.4" y="13.6" width="1.2" height="1.2"/><rect x="4.4" y="16.2" width="1.2" height="1.2"/></g></svg>
<svg style="left:1284px;top:438px;" width="20" height="20" viewBox="0 0 20 20"><g fill="none" stroke="#d0d0d0" stroke-width="1.1"><rect x="1.7" y="1.7" width="15" height="15"/><path d="M1.7 5.4 H16.7 M1.7 9.2 H16.7 M1.7 13 H16.7 M4.6 1.7 V16.7 M13.8 1.7 V16.7"/></g></svg>
<svg style="left:1322px;top:438px;" width="20" height="20" viewBox="0 0 20 20"><g fill="none" stroke="#d0d0d0" stroke-width="1.1"><rect x="1.5" y="1.7" width="15.2" height="15"/><path d="M1.5 6.7 H16.7 M1.5 11.7 H16.7 M6.6 1.7 V16.7 M11.6 1.7 V16.7"/></g></svg>
<div class="a" style="left:1112px;top:465px;width:252px;height:1px;background:#4a4a4a;"></div>
<span class="t " style="left:1123px;top:479.8px;font-size:10px;letter-spacing:-0.276px;color:#e2e2e2;">Guías</span>
<div class="a" style="left:1244px;top:476.2px;width:22px;height:22px;background:#2e2e2e;border-radius:3px"></div>
<div class="a" style="left:1282.3px;top:476.2px;width:22px;height:22px;background:#2e2e2e;border-radius:3px"></div>
<div class="a" style="left:1320.3px;top:476.2px;width:22px;height:22px;background:#2e2e2e;border-radius:3px"></div>
<svg style="left:1244px;top:476.2px;" width="22" height="22" viewBox="0 0 22 22"><g stroke="#d0d0d0" stroke-width="1.1" fill="none"><path d="M6.6 2.8 V19 M9.7 2.8 V19 M2.9 8.3 H19.1 M2.9 15.3 H19.1"/></g></svg>
<svg style="left:1282.3px;top:476.2px;" width="22" height="22" viewBox="0 0 22 22"><g stroke="#d0d0d0" stroke-width="1.1" fill="none"><path d="M6.6 2.8 V19 M9.7 2.8 V19 M2.9 8.3 H19.1 M2.9 15.3 H11.6"/></g><rect x="12.6" y="15.2" width="7" height="4.6" fill="#d0d0d0"/><path d="M14.2 15 V13 C14.2 10.6 18 10.6 18 13" fill="none" stroke="#d0d0d0" stroke-width="1.2"/></svg>
<svg style="left:1320.3px;top:476.2px;" width="22" height="22" viewBox="0 0 22 22"><g stroke="#d0d0d0" stroke-width="1.1" fill="none"><path d="M6.3 2.8 V19 M3 8.3 H18.8"/><path d="M11.4 5.4 L8 8.3 L11.4 11.2"/></g><path d="M16.6 10.8 L13.4 15.4 H15.6 L14 19.6 L19.4 13.8 H16.8 L18.6 10.8 Z" fill="#d0d0d0"/></svg>
<div class="a" style="left:1112px;top:505px;width:252px;height:1px;background:#4a4a4a;"></div>
<span class="t " style="left:1123px;top:510.79999999999995px;font-size:10px;letter-spacing:-0.053px;color:#e2e2e2;">Acciones rápidas</span>
<div class="a" style="left:1123px;top:533.5px;width:219.6px;height:20px;background:#545454;border:1px solid #6b6b6b;border-radius:3px"></div>
<span class="t " style="left:1195px;top:536.8px;font-size:10.3px;letter-spacing:0.055px;color:#ececec;">Importar archivo</span>
<svg style="left:0px;top:0px;" width="1" height="1" viewBox="0 0 1 1"><path d="M1161.6 734.4 L1183.3 712.6 L1161.1 690.2 L1130.5 721.7 L1161.1 754.4 L1172.8 742.8" fill="none" stroke="#5b6150" stroke-width="10.6" stroke-linejoin="round" stroke-linecap="butt"/></svg>
<span class="t" style="left:1199px;top:692.5px;height:64px;line-height:64px;font-size:60px;color:#575757;letter-spacing:3.5px">Platzi</span>
<span class="t " style="left:56px;top:750.2px;font-size:9.5px;letter-spacing:0.180px;color:#e2e2e2;">60.75%</span>
<svg style="left:98px;top:755px;" width="9" height="7" viewBox="0 0 9 7"><path d="M1 1.8 L4.4 5 L7.8 1.8" fill="none" stroke="#cfcfcf" stroke-width="1.2"/></svg>
<svg style="left:118px;top:753px;" width="30" height="11" viewBox="0 0 30 11"><rect x="0.5" y="1" width="1.6" height="9" fill="#8a8a8a"/><path d="M8.6 1 V10 L2.8 5.5 Z" fill="#8a8a8a"/><path d="M28.4 1.4 V9.6 L22.4 5.5 Z" fill="#8a8a8a"/></svg>
<div class="a" style="left:158.5px;top:750.6px;width:89.5px;height:14.6px;background:#404040;border:1px solid #6b6b6b;border-radius:2px"></div>
<div class="a" style="left:230px;top:751.6px;width:1px;height:12.6px;background:#6b6b6b;"></div>
<span class="t " style="left:163px;top:750.4px;font-size:10px;color:#f0f0f0;">1</span>
<svg style="left:234.5px;top:755px;" width="10" height="7" viewBox="0 0 10 7"><path d="M1.4 1.6 L4.8 4.8 L8.2 1.6" fill="none" stroke="#cfcfcf" stroke-width="1.2"/></svg>
<svg style="left:261px;top:753px;" width="30" height="11" viewBox="0 0 30 11"><path d="M1 1.4 V9.6 L7.2 5.5 Z" fill="#8a8a8a"/><path d="M19.6 1 V10 L25.4 5.5 Z" fill="#8a8a8a"/><rect x="26.2" y="1" width="1.6" height="9" fill="#8a8a8a"/></svg>
<svg style="left:305px;top:751px;" width="20" height="16" viewBox="0 0 20 16"><circle cx="7.5" cy="7.2" r="6.4" fill="#d6d6d6"/><path d="M4.2 4.2 H8.2 V8.6 H11.8 V15 H4.2 Z" fill="#4c4c4c"/><path d="M8.6 4.6 L11.4 7.6 H8.6 Z" fill="#5a5a5a"/><ellipse cx="16.6" cy="12.2" rx="1.5" ry="1" fill="#cfcfcf"/></svg>
<span class="t " style="left:338px;top:750.6px;font-size:10px;letter-spacing:0.134px;color:#e2e2e2;">[Básico] (usado)</span>
<svg style="left:440px;top:755px;" width="10" height="7" viewBox="0 0 10 7"><path d="M1 1.6 L4.6 4.8 L8.2 1.6" fill="none" stroke="#cfcfcf" stroke-width="1.2"/></svg>
<div class="a" style="left:463.8px;top:753.2px;width:10.6px;height:10.6px;border-radius:50%;background:#3fb045"></div>
<span class="t " style="left:480px;top:750.6px;font-size:10px;letter-spacing:0.017px;color:#e2e2e2;">Sin errores</span>
<svg style="left:552px;top:755px;" width="10" height="7" viewBox="0 0 10 7"><path d="M1 1.6 L4.6 4.8 L8.2 1.6" fill="none" stroke="#cfcfcf" stroke-width="1.2"/></svg>
<div class="a" style="left:563px;top:750px;width:509px;height:16px;background:#4a4a4a;"></div>
<svg style="left:571px;top:753px;" width="8" height="11" viewBox="0 0 8 11"><path d="M5.2 1.8 L1.9 5.6 L5.2 9.4" fill="none" stroke="#7c7c7c" stroke-width="1.3"/></svg>
<div class="a" style="left:755.5px;top:751px;width:244px;height:14.4px;background:#6a6a6a;border-radius:7.2px"></div>
<svg style="left:1060px;top:753px;" width="8" height="11" viewBox="0 0 8 11"><path d="M2.8 1.8 L6.2 5.6 L2.8 9.4" fill="none" stroke="#999" stroke-width="1.3"/></svg>
<svg style="left:1077px;top:752.6px;" width="17" height="12" viewBox="0 0 17 12"><g fill="none" stroke="#cfcfcf" stroke-width="1.3"><rect x="0.8" y="0.8" width="14.6" height="9.8"/><path d="M8.1 0.8 V10.6"/></g></svg>
<div class="a" style="left:1095px;top:749px;width:15px;height:17px;background:#4e4e4e;"></div>
<svg style="left:1095px;top:749px;" width="15" height="16" viewBox="0 0 15 16"><g fill="#666666"><rect x="14" y="2" width="1" height="1"/><rect x="12" y="4" width="1" height="1"/><rect x="14" y="4" width="1" height="1"/><rect x="10" y="6" width="1" height="1"/><rect x="12" y="6" width="1" height="1"/><rect x="14" y="6" width="1" height="1"/><rect x="8" y="8" width="1" height="1"/><rect x="10" y="8" width="1" height="1"/><rect x="12" y="8" width="1" height="1"/><rect x="14" y="8" width="1" height="1"/><rect x="6" y="10" width="1" height="1"/><rect x="8" y="10" width="1" height="1"/><rect x="10" y="10" width="1" height="1"/><rect x="12" y="10" width="1" height="1"/><rect x="14" y="10" width="1" height="1"/><rect x="4" y="12" width="1" height="1"/><rect x="6" y="12" width="1" height="1"/><rect x="8" y="12" width="1" height="1"/><rect x="10" y="12" width="1" height="1"/><rect x="12" y="12" width="1" height="1"/><rect x="14" y="12" width="1" height="1"/><rect x="2" y="14" width="1" height="1"/><rect x="4" y="14" width="1" height="1"/><rect x="6" y="14" width="1" height="1"/><rect x="8" y="14" width="1" height="1"/><rect x="10" y="14" width="1" height="1"/><rect x="12" y="14" width="1" height="1"/><rect x="14" y="14" width="1" height="1"/></g></svg>
</div>
</body></html>
